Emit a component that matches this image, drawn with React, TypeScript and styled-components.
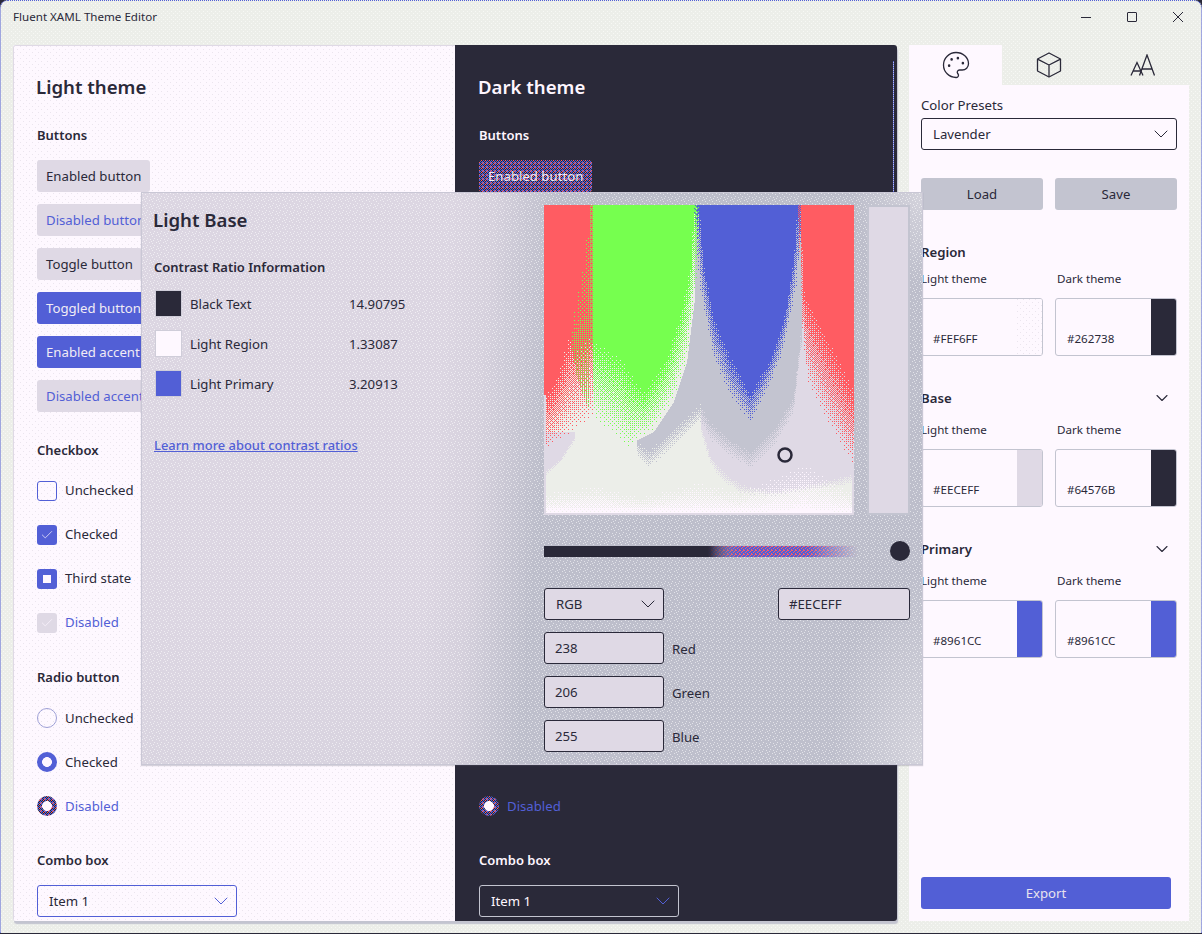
import React from 'react'
import styled, { createGlobalStyle, css } from 'styled-components'
import { Check, ChevronDown, Palette } from 'lucide-react'

const INK = '#2a2939'
const BLUE = '#525fd6'
const RED = '#ff5c62'
const GREEN = '#76ff4f'
const GRAY = '#c3c4d0'
const LAVENDER = '#dfd9e5'
const CHALK = '#eceee9'
const PAPER = '#fef8ff'
const WHITE = '#fef6ff'

// small svg tile for the dithered acrylic look of the app
const tile = (size: number, back: string, groups: [string, number[][]][]) => {
  const bg = back ? `<rect width='${size}' height='${size}' fill='${back}'/>` : ''
  const rects = groups
    .map(([color, cells]) => cells.map(([x, y]) => `<rect x='${x}' y='${y}' width='1' height='1' fill='${color}'/>`).join(''))
    .join('')
  const svg = `<svg xmlns='http://www.w3.org/2000/svg' width='${size}' height='${size}' shape-rendering='crispEdges'>${bg}${rects}</svg>`
  return `url("data:image/svg+xml,${encodeURIComponent(svg)}")`
}

const PANEL_SPECK = tile(6, '', [['#ebe5ee', [[0, 0], [3, 3]]]])
const WINDOW_SPECK = tile(4, '', [['#f7f8f5', [[0, 0], [2, 2]]]])
const FLYOUT_NOISE = tile(7, '', [['rgba(255,255,255,0.55)', [[0, 0], [3, 1], [5, 3], [1, 4], [4, 5], [2, 6]]]])
const RED_BLUE = tile(4, BLUE, [[RED, [[0, 0], [2, 1], [1, 2], [3, 3], [3, 0]]]])
const NOISY_DARK = tile(4, INK, [
  [BLUE, [[0, 0], [1, 1], [3, 1], [2, 2], [1, 3], [0, 3], [3, 2]]],
  [RED, [[2, 0], [0, 2], [3, 3]]]
])

const GlobalStyle = createGlobalStyle`
  html, body {
    margin: 0;
    background: ${INK};
  }
  body {
    font-family: "Noto Sans", "Open Sans", sans-serif;
    font-size: 13.2px;
    color: ${INK};
  }
`

const Window = styled.div`
  position: relative;
  box-sizing: border-box;
  width: 1202px;
  height: 933px;
  overflow: hidden;
  display: flex;
  flex-direction: column;
  background: ${WINDOW_SPECK} ${CHALK};
  border: 1px dotted ${BLUE};
  border-bottom: 0;
  border-radius: 8px 8px 0 0;
`

const TitleBar = styled.header`
  display: flex;
  justify-content: space-between;
  height: 44px;
  padding-left: 12px;
`

const TitleText = styled.span`
  font-size: 11.6px;
  line-height: 32px;
`

const Controls = styled.div`
  display: flex;
  height: 32px;
`

const ControlButton = styled.span`
  display: flex;
  width: 46px;
  align-items: center;
  justify-content: center;
`

const Body = styled.div`
  display: flex;
  gap: 12px;
  padding-left: 12px;
`

const Main = styled.main`
  display: flex;
  width: 884px;
  height: 876px;
  border-radius: 3px;
  overflow: hidden;
  box-shadow: 1px 3px 1px #c3c4d0;
`

const Column = styled.section<{ $dark?: boolean }>`
  position: relative;
  box-sizing: border-box;
  width: 442px;
  height: 876px;
  overflow: hidden;
  padding: 28px 0 0 24px;
  color: ${p => (p.$dark ? WHITE : INK)};
  background: ${p => (p.$dark ? INK : `${PANEL_SPECK} ${PAPER}`)};
  ${p =>
    !p.$dark &&
    css`
      border-top: 1px solid ${LAVENDER};
      border-left: 1px solid ${LAVENDER};
      padding: 27px 0 0 23px;
    `}
`

const ScrollLine = styled.i`
  position: absolute;
  top: 16px;
  right: 3px;
  width: 1px;
  height: 400px;
  background: repeating-linear-gradient(180deg, ${BLUE} 0 1px, #b9bde8 1px 2px);
`

const PanelTitle = styled.h1`
  margin: 0 0 24px -1px;
  font-size: 18.6px;
  font-weight: 600;
  line-height: 28px;
`

const SectionTitle = styled.h2`
  margin: 0 0 15px;
  font-size: 13px;
  font-weight: 600;
  line-height: 20px;
`

const Stack = styled.div`
  display: flex;
  flex-direction: column;
  align-items: flex-start;
  gap: 12px;
  margin-bottom: 28px;
`

type Tone = 'plain' | 'disabled' | 'accent' | 'dithered'

const toneStyles: Record<Tone, ReturnType<typeof css>> = {
  plain: css`
    background: ${LAVENDER};
    color: ${INK};
  `,
  disabled: css`
    background: ${LAVENDER};
    color: ${BLUE};
  `,
  accent: css`
    background: ${BLUE};
    color: #f1ecf5;
  `,
  dithered: css`
    background: ${NOISY_DARK};
    color: #f1ecf5;
  `
}

const Button = styled.div<{ $tone: Tone }>`
  box-sizing: border-box;
  height: 32px;
  padding: 0 9px;
  border-radius: 3px;
  line-height: 32px;
  white-space: nowrap;
  ${p => toneStyles[p.$tone]}
`

const OptionRow = styled.div<{ $ghost?: boolean }>`
  display: flex;
  align-items: center;
  gap: 8px;
  height: 32px;
  ${p => p.$ghost && 'visibility: hidden;'}
`

const OptionLabel = styled.span<{ $off?: boolean }>`
  ${p => p.$off && `color: ${BLUE};`}
`

const CheckLabel = styled(OptionLabel)`
  margin-top: -2px;
`

const CheckMark = styled.span<{ $state: 'off' | 'on' | 'mixed' | 'disabled' }>`
  box-sizing: border-box;
  display: flex;
  align-items: center;
  justify-content: center;
  width: 20px;
  height: 20px;
  border-radius: 3px;
  color: ${WHITE};
  background: ${p => (p.$state === 'off' ? 'transparent' : p.$state === 'disabled' ? LAVENDER : BLUE)};
  border: ${p => (p.$state === 'off' ? `1px solid ${BLUE}` : '0')};
`

const MixedDot = styled.span`
  width: 8px;
  height: 8px;
  background: ${WHITE};
`

const RadioMark = styled.span<{ $state: 'off' | 'on' | 'disabled' }>`
  box-sizing: border-box;
  display: block;
  width: 20px;
  height: 20px;
  border-radius: 50%;
  ${p =>
    p.$state === 'off' &&
    css`
      border: 1px solid #9ea0d6;
    `}
  ${p =>
    p.$state === 'on' &&
    css`
      background: radial-gradient(circle, ${WHITE} 0 4.6px, ${BLUE} 5.2px);
    `}
  ${p =>
    p.$state === 'disabled' &&
    css`
      background: radial-gradient(circle, ${WHITE} 0 4.6px, transparent 5.2px), ${NOISY_DARK};
    `}
`

const ComboBox = styled.div<{ $width: number; $line: string; $fill?: string }>`
  box-sizing: border-box;
  display: flex;
  align-items: center;
  justify-content: space-between;
  width: ${p => p.$width}px;
  height: 32px;
  padding: 0 3px 0 11px;
  border: 1px solid ${p => p.$line};
  border-radius: 3px;
  background: ${p => p.$fill ?? 'transparent'};
`

const Side = styled.aside`
  display: flex;
  flex-direction: column;
  width: 280px;
  height: 876px;
`

const Tabs = styled.nav`
  display: grid;
  grid-template-columns: 93px 94px 93px;
  height: 40px;
`

const Tab = styled.div<{ $active?: boolean }>`
  display: flex;
  align-items: center;
  justify-content: center;
  background: ${p => (p.$active ? PAPER : 'transparent')};
`

const SidePanel = styled.div`
  flex: 1;
  display: flex;
  flex-direction: column;
  padding: 10px 12px 12px;
  background: ${PAPER};
`

const FieldLabel = styled.label`
  display: block;
  line-height: 20px;
  margin-bottom: 3px;
`

const ActionRow = styled.div`
  display: grid;
  grid-template-columns: 122px 122px;
  gap: 12px;
  margin: 28px 0 32px;
`

const ActionButton = styled.div`
  height: 32px;
  border-radius: 3px;
  background: ${GRAY};
  text-align: center;
  line-height: 32px;
`

const GroupHead = styled.div<{ $collapsible?: boolean }>`
  display: flex;
  align-items: center;
  justify-content: space-between;
  height: 20px;
  margin-bottom: ${p => (p.$collapsible ? 13 : 8)}px;
  padding-right: 5px;
  font-weight: 600;
`

const SwatchGrid = styled.div`
  display: grid;
  grid-template-columns: 122px 122px;
  column-gap: 12px;
  margin-bottom: 32px;
`

const SwatchCaption = styled.span<{ $indent?: number }>`
  height: 18px;
  margin-bottom: 10px;
  padding-left: ${p => p.$indent ?? 0}px;
  font-size: 11.6px;
  line-height: 18px;
`

const ColorCard = styled.div`
  box-sizing: border-box;
  display: flex;
  justify-content: space-between;
  height: 58px;
  border: 1px solid ${GRAY};
  border-radius: 3px;
  overflow: hidden;
`

const ColorCode = styled.span`
  align-self: flex-end;
  padding: 0 0 8px 11px;
  font-size: 11.6px;
  line-height: 16px;
`

const ColorChip = styled.span<{ $color: string; $speckled?: boolean }>`
  width: 25px;
  background: ${p => (p.$speckled ? `${PANEL_SPECK} ${p.$color}` : p.$color)};
`

const ExportButton = styled.div`
  width: 250px;
  height: 32px;
  margin-top: auto;
  border-radius: 3px;
  background: ${BLUE};
  color: #e9e3ee;
  text-align: center;
  line-height: 32px;
`

const Flyout = styled.div`
  position: absolute;
  left: 140px;
  top: 191px;
  box-sizing: border-box;
  display: flex;
  width: 782px;
  height: 573px;
  padding: 12px 12px 0 11px;
  border: 1px solid #c9c7d5;
  box-shadow: 0 1px 1px rgba(90, 90, 110, 0.25);
  background:
    ${FLYOUT_NOISE},
    radial-gradient(ellipse 70px 90px at 100% 0, #d4d3dc, transparent),
    radial-gradient(ellipse 90px 190px at 100% 100%, #d4d3dc, transparent),
    linear-gradient(172deg, transparent 0 65%, rgba(195, 196, 208, 0.22) 100%),
    linear-gradient(94deg, #dcd6e2 0 38%, #d6d1dd 43%, #bdbecb 51%, #bdbecb 100%);
`

const FlyoutInfo = styled.div`
  width: 391px;
  padding-top: 1px;
`

const FlyoutTitle = styled.h2`
  margin: 0 0 23px;
  font-size: 18.6px;
  font-weight: 600;
  line-height: 28px;
`

const InfoHead = styled.h3`
  margin: 0 0 13px 1px;
  font-size: 13px;
  font-weight: 600;
  line-height: 20px;
`

const RatioRow = styled.div`
  display: grid;
  grid-template-columns: 27px 151px auto;
  column-gap: 8px;
  align-items: center;
  height: 27px;
  margin: 0 0 13px 2px;
`

const RatioSwatch = styled.span<{ $color: string }>`
  box-sizing: border-box;
  height: 27px;
  background: ${p => p.$color};
  border: 1px solid #cfcdd9;
`

const LearnLink = styled.a`
  display: block;
  margin: 38px 0 0 1px;
  color: ${BLUE};
  font-size: 12.9px;
  font-weight: 500;
  line-height: 20px;
  text-decoration: underline;
`

const Picker = styled.div`
  width: 366px;
`

const PickerRow = styled.div`
  display: flex;
  justify-content: space-between;
`

const Spectrum = styled.svg`
  display: block;
  width: 310px;
  height: 310px;
  shape-rendering: crispEdges;
`

const SwatchStrip = styled.div`
  box-sizing: border-box;
  width: 43px;
  height: 310px;
  background: ${LAVENDER};
  border: 2px solid ${GRAY};
`

const SliderRow = styled.div`
  display: flex;
  align-items: center;
  justify-content: space-between;
  height: 20px;
  margin: 26px 0 27px;
`

const SliderTrack = styled.div`
  position: relative;
  width: 314px;
  height: 11px;
  background: linear-gradient(90deg, ${INK} 0 53%, rgba(42, 41, 57, 0.35) 60%, transparent 80%);
  &::after {
    content: '';
    position: absolute;
    inset: 0;
    background: ${RED_BLUE};
    mask-image: linear-gradient(90deg, transparent 52%, #000 62%, #000 84%, transparent 100%);
  }
`

const SliderThumb = styled.span`
  width: 20px;
  height: 20px;
  border-radius: 50%;
  background: ${INK};
`

const FieldRow = styled.div`
  display: flex;
  align-items: center;
  gap: 8px;
  margin-bottom: 12px;
`

const FieldName = styled.span`
  padding-top: 2px;
`

const FieldSpread = styled(FieldRow)`
  justify-content: space-between;
  gap: 0;
`

const NumberBox = styled.div<{ $width: number }>`
  box-sizing: border-box;
  width: ${p => p.$width}px;
  height: 32px;
  padding-left: 10px;
  border: 1px solid ${INK};
  border-radius: 3px;
  background: ${LAVENDER};
  line-height: 30px;
`

const WindowIcon = ({ kind }: { kind: 'min' | 'max' | 'close' }) => (
  <svg width="12" height="12" viewBox="0 0 12 12" fill="none" stroke={INK} strokeWidth="1">
    {kind === 'min' && <path d="M1 6.5h10" />}
    {kind === 'max' && <rect x="1.5" y="1.5" width="9" height="9" rx="0.5" />}
    {kind === 'close' && <path d="M1 1l10 10M11 1L1 11" />}
  </svg>
)

const CubeIcon = () => (
  <svg width="26" height="26" viewBox="0 0 26 26" fill="none" stroke={INK} strokeWidth="1.3" strokeLinejoin="round">
    <path d="M13 1 24.500 7v12L13 25 1.500 19V7z" />
    <path d="M2 7.300 13 13l11-5.700M13 13v11.500" />
  </svg>
)

const FontSizeIcon = () => (
  <svg width="26" height="22" viewBox="0 0 26 22" fill="none" stroke={INK} strokeWidth="1.3">
    <path d="M1 21.500 7 8.500l6 13M3 17h8" />
    <path d="M9.500 21.500 17 1l7.500 20.500M12 15h10" />
  </svg>
)

// the colour field of the picker: traced curves, filled with 4x4 ordered dithering.
// curve points are [x, y] read off a 3x crop, where (12, 30) is the corner of the field
const BAYER = [
  [0, 8, 2, 10],
  [12, 4, 14, 6],
  [3, 11, 1, 9],
  [15, 7, 13, 5]
]
const clamp = (v: number) => Math.max(0, Math.min(1, v))
const at = (pts: number[][], v: number) => {
  if (v <= pts[0][0]) return pts[0][1]
  for (let i = 1; i < pts.length; i++) {
    if (v <= pts[i][0]) {
      const [x0, y0] = pts[i - 1]
      const [x1, y1] = pts[i]
      return y0 + ((y1 - y0) * (v - x0)) / (x1 - x0)
    }
  }
  return pts[pts.length - 1][1]
}

const SOLID = [
  [[12, 600], [45, 550], [90, 400], [165, 300]],
  [[150, 430], [160, 430], [240, 480], [310, 590], [380, 480], [420, 350], [450, 200], [460, 30], [480, 30]],
  [[440, 30], [478, 30], [490, 200], [520, 360], [570, 480], [630, 590], [690, 490], [735, 350], [760, 180], [770, 30], [790, 30]],
  [[760, 30], [783, 30], [790, 280], [850, 400], [942, 580]]
]
const FADE = [
  [[12, 810], [20, 760], [100, 715], [160, 670], [170, 675]],
  [[160, 680], [270, 770], [290, 735], [340, 710], [400, 620], [440, 500], [465, 300], [480, 150]],
  [[440, 150], [480, 300], [520, 500], [570, 610], [632, 690], [720, 500], [770, 280], [790, 30]],
  [[760, 300], [790, 450], [800, 560], [870, 700], [942, 820]]
]
const HUES = [RED, GREEN, BLUE, RED]
const GREEN_LEFT = [[30, 148], [200, 130], [350, 100], [430, 90], [550, 110], [680, 160]]
const GRAY_EDGE = [[290, 735], [325, 765], [400, 700], [480, 625], [510, 680], [570, 730], [630, 765], [700, 700], [760, 600], [780, 420]]
const LAV_LEFT = [[12, 830], [60, 790], [105, 720]]
const LAV_RIGHT = [[480, 680], [510, 780], [550, 830], [600, 865], [700, 885], [790, 870], [936, 835]]
const WHITE_START = [[18, 885], [170, 860], [300, 900], [470, 850], [600, 880], [700, 835], [790, 785], [860, 835], [936, 880]]

const pickBand = (zx: number, t: number) => {
  if (zx < 146) return 0
  if (zx < 162) return t < (zx - 146) / 16 ? 1 : 0
  if (zx < 458) return 1
  if (zx < 478) return t < (zx - 458) / 20 ? 2 : 1
  if (zx < 768) return 2
  if (zx < 786) return t < (zx - 768) / 18 ? 3 : 2
  return 3
}

const fieldColor = (x: number, y: number) => {
  const zx = 3 * x + 12
  const zy = 3 * y + 30
  const t = (BAYER[y % 4][x % 4] + 0.5) / 16
  const t2 = (BAYER[(y + 1) % 4][(x + 2) % 4] + 0.5) / 16

  const band = pickBand(zx, t2)
  const solid = at(SOLID[band], zx)
  const fade = at(FADE[band], zx)
  const inGreenDots = band === 0 && zx > 88 && zy < 680 && zx > at(GREEN_LEFT, zy)
  const power = band === 0 || band === 3 ? 1 : 1.2
  if (t < clamp((fade - zy) / Math.max(1, fade - solid)) ** power) {
    if (inGreenDots) {
      const left = at(GREEN_LEFT, zy)
      if (t2 < 0.05 + (0.2 * (zx - left)) / (165 - left)) return (x + y) % 2 ? GREEN : CHALK
    }
    return HUES[band]
  }
  if (inGreenDots && t2 < 0.25) return GREEN

  const w0 = at(WHITE_START, zx)
  if (t2 < clamp((zy - w0) / (950 - w0)) ** 1.7) return WHITE
  const behindGreen = zx < 465 && zy < at(FADE[1], zx)
  if (zx > 288 && zx < 785 && !behindGreen) {
    const edge = at(GRAY_EDGE, zx)
    if (t < clamp((edge + 55 - zy) / 55)) return GRAY
  }
  if (zx < 105 && zy > 710 && zy < at(LAV_LEFT, zx) + 14 * t) return LAVENDER
  if (zx > 480 && zy < at(LAV_RIGHT, zx) + 30 * t) return LAVENDER
  return CHALK
}

const fieldPaths = () => {
  const runs: Record<string, string[]> = {}
  for (let y = 0; y < 310; y++) {
    let start = 0
    let color = fieldColor(0, y)
    for (let x = 1; x <= 310; x++) {
      const next = x < 310 ? fieldColor(x, y) : ''
      if (next !== color) {
        ;(runs[color] ??= []).push(`M${start} ${y}h${x - start}v1h${start - x}z`)
        start = x
        color = next
      }
    }
  }
  return Object.entries(runs).map(([fill, parts]) => ({ fill, d: parts.join('') }))
}

const FIELD = fieldPaths()

const SpectrumField = () => (
  <Spectrum viewBox="0 0 310 310">
    {FIELD.map(p => (
      <path key={p.fill} fill={p.fill} d={p.d} />
    ))}
    <rect x="0" y="190" width="2" height="120" fill={LAVENDER} />
    <rect x="308" y="262" width="2" height="48" fill={LAVENDER} />
    <rect x="0" y="308" width="310" height="2" fill={LAVENDER} />
    <circle cx="241" cy="250" r="6.500" fill="none" stroke={INK} strokeWidth="2.500" style={{ shapeRendering: 'auto' }} />
  </Spectrum>
)

const ThemeColumn = ({ dark }: { dark?: boolean }) => (
  <Column $dark={dark}>
    {dark && <ScrollLine />}
    <PanelTitle>{dark ? 'Dark theme' : 'Light theme'}</PanelTitle>
    <SectionTitle>Buttons</SectionTitle>
    <Stack>
      <Button $tone={dark ? 'dithered' : 'plain'}>Enabled button</Button>
      <Button $tone="disabled">Disabled button</Button>
      <Button $tone={dark ? 'dithered' : 'plain'}>Toggle button</Button>
      <Button $tone="accent">Toggled button</Button>
      <Button $tone="accent">Enabled accent button</Button>
      <Button $tone="disabled">Disabled accent button</Button>
    </Stack>
    <SectionTitle>Checkbox</SectionTitle>
    <Stack>
      <OptionRow>
        <CheckMark $state="off" />
        <CheckLabel>Unchecked</CheckLabel>
      </OptionRow>
      <OptionRow>
        <CheckMark $state="on">
          <Check size={14} strokeWidth={1.2} />
        </CheckMark>
        <CheckLabel>Checked</CheckLabel>
      </OptionRow>
      <OptionRow>
        <CheckMark $state="mixed">
          <MixedDot />
        </CheckMark>
        <CheckLabel>Third state</CheckLabel>
      </OptionRow>
      <OptionRow>
        <CheckMark $state="disabled">
          <Check size={14} strokeWidth={1.2} />
        </CheckMark>
        <CheckLabel $off>Disabled</CheckLabel>
      </OptionRow>
    </Stack>
    <SectionTitle>Radio button</SectionTitle>
    <Stack>
      <OptionRow>
        <RadioMark $state="off" />
        <OptionLabel>Unchecked</OptionLabel>
      </OptionRow>
      <OptionRow $ghost={dark}>
        <RadioMark $state="on" />
        <OptionLabel>Checked</OptionLabel>
      </OptionRow>
      <OptionRow>
        <RadioMark $state="disabled" />
        <OptionLabel $off>Disabled</OptionLabel>
      </OptionRow>
    </Stack>
    <SectionTitle>Combo box</SectionTitle>
    <ComboBox $width={200} $line={dark ? GRAY : BLUE}>
      Item 1
      <ChevronDown size={24} strokeWidth={1} color={BLUE} />
    </ComboBox>
  </Column>
)

const swatchGroups = [
  { name: 'Region', collapsible: false, light: ['#FEF6FF', PAPER], dark: ['#262738', INK] },
  { name: 'Base', collapsible: true, light: ['#EECEFF', LAVENDER], dark: ['#64576B', INK] },
  { name: 'Primary', collapsible: true, light: ['#8961CC', BLUE], dark: ['#8961CC', BLUE] }
]

export default function App() {
  return (
    <>
      <GlobalStyle />
      <Window>
        <TitleBar>
          <TitleText>Fluent XAML Theme Editor</TitleText>
          <Controls>
            <ControlButton>
              <WindowIcon kind="min" />
            </ControlButton>
            <ControlButton>
              <WindowIcon kind="max" />
            </ControlButton>
            <ControlButton>
              <WindowIcon kind="close" />
            </ControlButton>
          </Controls>
        </TitleBar>
        <Body>
          <Main>
            <ThemeColumn />
            <ThemeColumn dark />
          </Main>
          <Side>
            <Tabs>
              <Tab $active>
                <Palette size={30} strokeWidth={1.05} />
              </Tab>
              <Tab>
                <CubeIcon />
              </Tab>
              <Tab>
                <FontSizeIcon />
              </Tab>
            </Tabs>
            <SidePanel>
              <FieldLabel>Color Presets</FieldLabel>
              <ComboBox $width={256} $line={INK}>
                Lavender
                <ChevronDown size={24} strokeWidth={1} />
              </ComboBox>
              <ActionRow>
                <ActionButton>Load</ActionButton>
                <ActionButton>Save</ActionButton>
              </ActionRow>
              {swatchGroups.map(group => (
                <React.Fragment key={group.name}>
                  <GroupHead $collapsible={group.collapsible}>
                    {group.name}
                    {group.collapsible && <ChevronDown size={20} strokeWidth={1.3} />}
                  </GroupHead>
                  <SwatchGrid>
                    <SwatchCaption>Light theme</SwatchCaption>
                    <SwatchCaption $indent={2}>Dark theme</SwatchCaption>
                    <ColorCard>
                      <ColorCode>{group.light[0]}</ColorCode>
                      <ColorChip $color={group.light[1]} $speckled={group.name === 'Region'} />
                    </ColorCard>
                    <ColorCard>
                      <ColorCode>{group.dark[0]}</ColorCode>
                      <ColorChip $color={group.dark[1]} />
                    </ColorCard>
                  </SwatchGrid>
                </React.Fragment>
              ))}
              <ExportButton>Export</ExportButton>
            </SidePanel>
          </Side>
        </Body>
        <Flyout>
          <FlyoutInfo>
            <FlyoutTitle>Light Base</FlyoutTitle>
            <InfoHead>Contrast Ratio Information</InfoHead>
            <RatioRow>
              <RatioSwatch $color={INK} />
              <span>Black Text</span>
              <span>14.90795</span>
            </RatioRow>
            <RatioRow>
              <RatioSwatch $color={PAPER} />
              <span>Light Region</span>
              <span>1.33087</span>
            </RatioRow>
            <RatioRow>
              <RatioSwatch $color={BLUE} />
              <span>Light Primary</span>
              <span>3.20913</span>
            </RatioRow>
            <LearnLink>Learn more about contrast ratios</LearnLink>
          </FlyoutInfo>
          <Picker>
            <PickerRow>
              <SpectrumField />
              <SwatchStrip />
            </PickerRow>
            <SliderRow>
              <SliderTrack />
              <SliderThumb />
            </SliderRow>
            <FieldSpread>
              <ComboBox $width={120} $line={INK} $fill={LAVENDER}>
                RGB
                <ChevronDown size={24} strokeWidth={1} />
              </ComboBox>
              <NumberBox $width={132}>#EECEFF</NumberBox>
            </FieldSpread>
            <FieldRow>
              <NumberBox $width={120}>238</NumberBox>
              <FieldName>Red</FieldName>
            </FieldRow>
            <FieldRow>
              <NumberBox $width={120}>206</NumberBox>
              <FieldName>Green</FieldName>
            </FieldRow>
            <FieldRow>
              <NumberBox $width={120}>255</NumberBox>
              <FieldName>Blue</FieldName>
            </FieldRow>
          </Picker>
        </Flyout>
      </Window>
    </>
  )
}
